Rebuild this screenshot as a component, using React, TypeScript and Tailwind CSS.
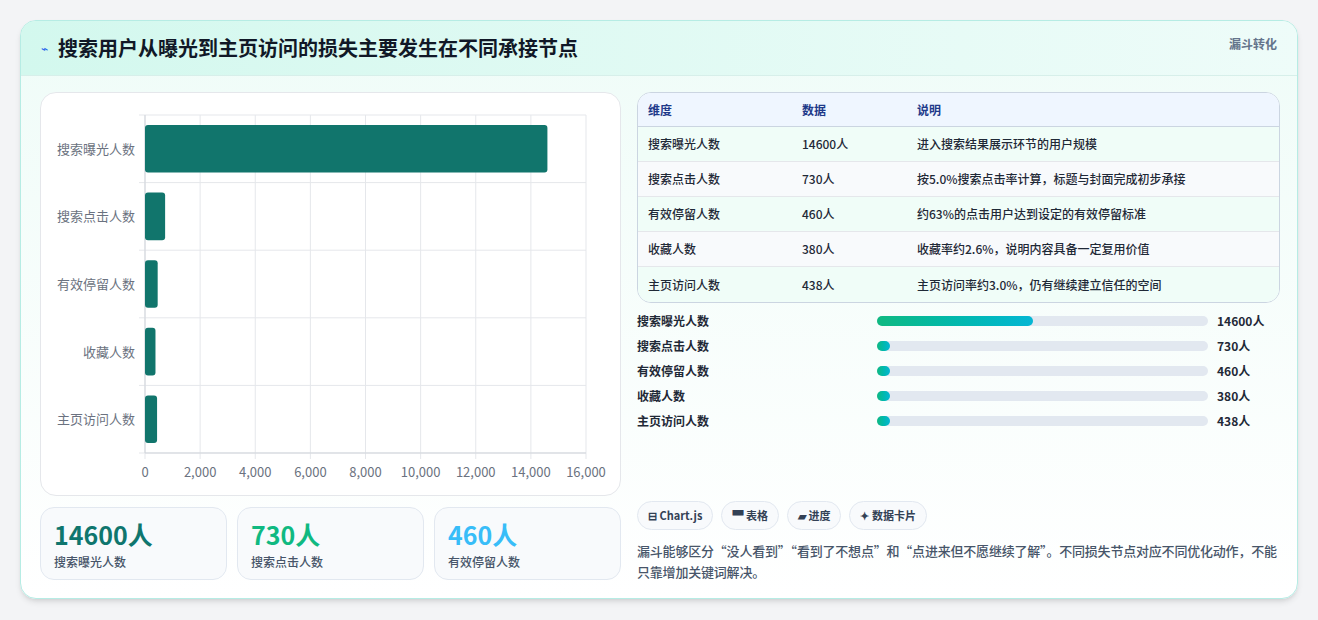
import React from "react";

const rows = [
  { n: "搜索曝光人数", v: 14600, d: "进入搜索结果展示环节的用户规模" },
  { n: "搜索点击人数", v: 730, d: "按5.0%搜索点击率计算，标题与封面完成初步承接" },
  { n: "有效停留人数", v: 460, d: "约63%的点击用户达到设定的有效停留标准" },
  { n: "收藏人数", v: 380, d: "收藏率约2.6%，说明内容具备一定复用价值" },
  { n: "主页访问人数", v: 438, d: "主页访问率约3.0%，仍有继续建立信任的空间" },
];

function Chart() {
  const x0 = 104, x1 = 545, y0 = 22, y1 = 360;
  const sx = (v: number) => x0 + ((x1 - x0) * v) / 16000;
  const rh = (y1 - y0) / 5;
  return (
    <svg width="578" height="400" className="block">
      {[0, 2000, 4000, 6000, 8000, 10000, 12000, 14000, 16000].map((t) => (
        <g key={t}>
          <line x1={sx(t)} x2={sx(t)} y1={y0} y2={y1 + 6} stroke="#e5e7eb" />
          <text x={sx(t)} y={384} textAnchor="middle" fontSize="13" fill="#6b7280">{t.toLocaleString("en-US")}</text>
        </g>
      ))}
      {[0, 1, 2, 3, 4, 5].map((i) => (
        <line key={i} x1={x0 - 6} x2={x1} y1={y0 + i * rh} y2={y0 + i * rh} stroke="#e5e7eb" />
      ))}
      <line x1={x0} x2={x0} y1={y0} y2={y1} stroke="#d1d5db" />
      <line x1={x0} x2={x1} y1={y1} y2={y1} stroke="#d1d5db" />
      {rows.map((r, i) => (
        <g key={r.n}>
          <rect x={x0} y={y0 + i * rh + 10} width={sx(r.v) - x0} height={rh - 20} rx="3" fill="#11756c" />
          <text x={x0 - 10} y={y0 + i * rh + rh / 2 + 5} textAnchor="end" fontSize="13" fill="#6b7280">{r.n}</text>
        </g>
      ))}
    </svg>
  );
}

export default function App() {
  const font = { fontFamily: '"Noto Sans CJK SC", "Noto Sans", sans-serif' };
  return (
    <div className="w-[1318px] h-[620px] bg-[#f3f4f6] pt-[20px] pl-[20px]" style={font}>
      <div className="w-[1278px] h-[579px] rounded-[16px] border border-[#b6ece4] bg-gradient-to-b from-[#effcf8] to-[#ffffff] overflow-hidden shadow-md">
        <div className="h-[55px] flex items-center justify-between px-[20px] bg-gradient-to-r from-[#d3f8ee] to-[#eefcf9] border-b border-[#d7efea]">
          <div className="flex items-center gap-[10px]">
            <span className="text-[#2563eb] text-[12px]">⌁</span>
            <span className="text-[20px] font-bold text-[#111827]">搜索用户从曝光到主页访问的损失主要发生在不同承接节点</span>
          </div>
          <span className="text-[12px] font-bold text-[#64748b] self-start mt-[14px]">漏斗转化</span>
        </div>
        <div className="flex gap-[16px] pl-[19px] pt-[16px]">
          <div className="w-[581px] flex flex-col gap-[11px]">
            <div className="h-[404px] rounded-[16px] border border-[#e5e7eb] bg-white">
              <Chart />
            </div>
            <div className="flex gap-[10px]">
              {[
                ["14600人", "搜索曝光人数", "text-[#0f766e]"],
                ["730人", "搜索点击人数", "text-[#10b981]"],
                ["460人", "有效停留人数", "text-[#38bdf8]"],
              ].map(([a, b, c]) => (
                <div key={b} className="flex-1 h-[73px] rounded-[14px] border border-[#e2e8f0] bg-[#f8fafc] px-[13px] pt-[10px]">
                  <div className={`text-[25px] font-bold leading-[32px] ${c}`}>{a}</div>
                  <div className="text-[12px] text-[#475569] font-medium mt-[3px]">{b}</div>
                </div>
              ))}
            </div>
          </div>
          <div className="w-[643px] flex flex-col">
            <div className="rounded-[14px] border border-[#cbd5e1] overflow-hidden bg-white">
              <div className="h-[34px] flex items-center bg-[#eff6ff] border-b border-[#cbd5e1] text-[12px] font-bold text-[#1e3a8a] px-[10px]">
                <span className="w-[154px]">维度</span><span className="w-[115px]">数据</span><span>说明</span>
              </div>
              {rows.map((r, i) => (
                <div key={r.n} className={`h-[35px] flex items-center px-[10px] text-[12px] font-medium text-[#1f2937] ${i < 4 ? "border-b border-[#e5e7eb]" : ""} ${i % 2 ? "bg-[#f8fafc]" : "bg-[#f0fdf8]"}`}>
                  <span className="w-[154px]">{r.n}</span><span className="w-[115px]">{r.v}人</span><span>{r.d}</span>
                </div>
              ))}
            </div>
            <div className="flex flex-col gap-[9px] mt-[10px]">
              {rows.map((r) => (
                <div key={r.n} className="h-[16px] flex items-center text-[12px] font-bold text-[#1f2937]">
                  <span className="w-[240px]">{r.n}</span>
                  <div className="w-[331px] h-[10px] rounded-full bg-[#e2e8f0]">
                    <div className="h-full rounded-full bg-gradient-to-r from-[#10b981] to-[#06b6d4]" style={{ width: `${Math.max(4, (r.v / 14600) * 47)}%` }} />
                  </div>
                  <span className="ml-[9px]">{r.v}人</span>
                </div>
              ))}
            </div>
            <div className="flex gap-[8px] mt-[72px]">
              {["⊟ Chart.js", "▀ 表格", "▰ 进度", "✦ 数据卡片"].map((c) => (
                <span key={c} className="h-[29px] px-[10px] flex items-center rounded-full border border-[#e2e8f0] bg-[#f8fafc] text-[11px] font-bold text-[#334155]">{c}</span>
              ))}
            </div>
            <p className="mt-[10px] text-[13px] leading-[21px] font-medium text-[#475569] w-[645px] tracking-[-0.2px]">
              漏斗能够区分“没人看到”“看到了不想点”和“点进来但不愿继续了解”。不同损失节点对应不同优化动作，不能只靠增加关键词解决。
            </p>
          </div>
        </div>
      </div>
    </div>
  );
}
